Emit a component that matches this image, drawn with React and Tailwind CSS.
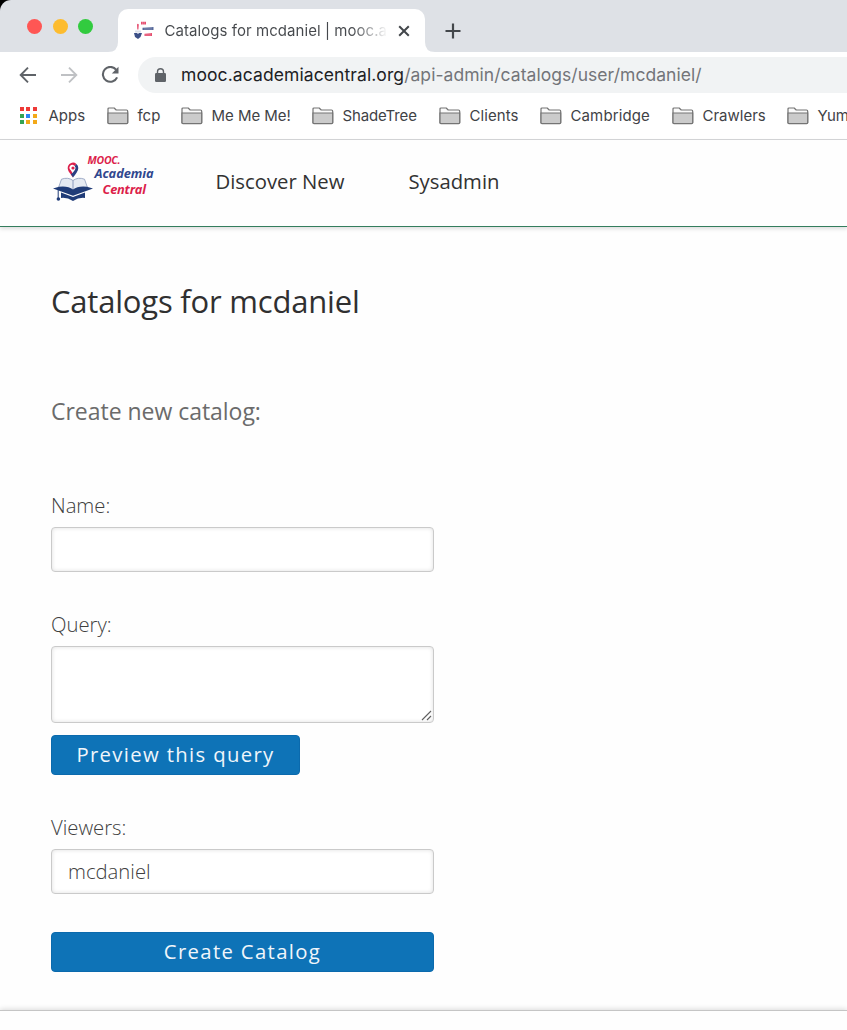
import React from "react";

const bookmarks = [
  { label: "fcp", box: "w-[74px]", text: "tracking-[0px]" },
  { label: "Me Me Me!", box: "w-[131px]", text: "tracking-[-0.03px]" },
  { label: "ShadeTree", box: "w-[127px]", text: "tracking-[-0.12px]" },
  { label: "Clients", box: "w-[101px]", text: "tracking-[0.08px]" },
  { label: "Cambridge", box: "w-[132px]", text: "tracking-[0.12px]" },
  { label: "Crawlers", box: "w-[115px]", text: "tracking-[0px]" },
  { label: "Yum", box: "w-[60px]", text: "tracking-[-0.1px]" },
];

const appColors = [
  "#ee3a37", "#ee3a37", "#ee3a37",
  "#34a353", "#2a84f5", "#f3a918",
  "#34a353", "#f3a918", "#f3a918",
];

function Folder() {
  return (
    <svg className="h-[18px] w-[22px] shrink-0" viewBox="0 0 22 18" fill="none">
      <path d="M1 15.8V2Q1 1 2 1H7.2L9.2 3H19.5Q20.7 3 20.7 4.2V15.8Z" fill="#fafafa" stroke="#747474" strokeWidth="1.2" strokeLinejoin="round" />
      <path d="M1 6H20.7V15.6Q20.7 16.6 19.7 16.6H2Q1 16.6 1 15.6Z" fill="#cbcbcb" stroke="#747474" strokeWidth="1.2" />
    </svg>
  );
}

function LogoMark({ className }) {
  return (
    <svg className={className} viewBox="0 0 40 40" fill="none">
      <path d="M20 15.5C17 11 14.7 9 14.7 6A5.3 5.3 0 0 1 23.4 1.9L21.7 4.1A2.9 2.9 0 1 0 17.8 8.2L19.5 11Z" fill="#dc1f4b" />
      <path d="M23.4 1.9A5.3 5.3 0 0 1 25.3 6C25.3 9 22.8 12 20 15.5L17.8 12L19.6 11L22 7.8A2.9 2.9 0 0 0 21.7 4.1Z" fill="#2b4083" />
      <circle cx="20" cy="6" r="1.6" fill="#dc1f4b" />
      <path d="M20 18.5Q15 14.8 8.5 17.2L5 27L20 31L35 27L31.5 17.2Q25 14.8 20 18.5Z" fill="#e5eaf2" stroke="#8b9abb" strokeWidth=".8" />
      <path d="M20 18.5V28" stroke="#7586ae" strokeWidth=".8" />
      <path d="M0 26.5L6 24.8Q15 23.7 20 27.5Q25 23.7 34 24.8L40 26.5L20 33.7Z" fill="#203c78" />
      <path d="M8 30.5L20 35L32 30.5V36Q26 35.2 20 39Q14 35.2 8 36Z" fill="#203c78" />
      <path d="M5.2 28V36" stroke="#203c78" strokeWidth="1" />
      <circle cx="5.4" cy="37" r="1.8" fill="#203c78" />
    </svg>
  );
}

function TabBar() {
  return (
    <div className="shrink-0 bg-black">
      <div className="flex h-[52px] rounded-tl-[11px] bg-[#dee1e6]">
        <div className="flex w-[108px] shrink-0 gap-[10.5px] pl-[27px] pt-[18.5px]">
          <span className="size-[15px] rounded-full bg-[#ff5654]" />
          <span className="size-[15px] rounded-full bg-[#fdbc2f]" />
          <span className="size-[15px] rounded-full bg-[#32cb3f]" />
        </div>
        <svg className="mt-[42px] size-[10px] shrink-0" viewBox="0 0 10 10"><path d="M10 0V10H0Q10 10 10 0Z" fill="white" /></svg>
        <div className="mt-[9px] flex h-[43px] w-[307px] shrink-0 items-center rounded-t-[10px] bg-white pl-[16px]">
          <svg className="h-[19px] w-[20px] shrink-0" viewBox="0 0 20 19">
            <g opacity=".9">
              <path d="M7 .7H12V3.5H7ZM10.5 12.7L18 12V15H10.5ZM3 3.5Q3.8 2 4.8 3.5L4.4 8.5H3.3Z" fill="#e33b60" />
              <path d="M8.5 6.7L19.5 6V9H8.5Z" fill="#445890" />
              <path d="M0 12H3L4 13L5 12H8L6.5 16L4 18L1 16Z" fill="#263d7b" />
              <path d="M1 9.5H7V11.5H1Z" fill="#d6dce8" />
              <path d="M8.5 0V4M10.2 0V4M11 6V10M13 5V10M15 5V10M17 5V10M12 12V16M14 12V16M16 12V16" stroke="white" strokeWidth=".4" opacity=".6" />
            </g>
          </svg>
          <div className="ml-[10.5px] w-[223px] shrink-0 whitespace-nowrap bg-[linear-gradient(90deg,#45484c_84%,transparent)] bg-clip-text font-['Inter','Roboto',sans-serif] text-[15px] leading-[22px] tracking-[0.06px] text-transparent">Catalogs for mcdaniel | mooc.a</div>
          <svg className="ml-[10px] size-[12px]" viewBox="0 0 12 12"><path d="M1.2 1.2L10.8 10.8M10.8 1.2L1.2 10.8" stroke="#43474b" strokeWidth="2" /></svg>
        </div>
        <svg className="mt-[42px] size-[10px] shrink-0" viewBox="0 0 10 10"><path d="M0 0V10H10Q0 10 0 0Z" fill="white" /></svg>
        <svg className="ml-[10px] mt-[23px] size-[16px]" viewBox="0 0 16 16"><path d="M8 .5V15.5M.5 8H15.5" stroke="#43474b" strokeWidth="2.2" /></svg>
      </div>
    </div>
  );
}

function Toolbar() {
  return (
    <div className="flex h-[46px] shrink-0 items-center bg-white pl-[19px]">
      <svg className="size-[18px] shrink-0" viewBox="0 0 18 18" fill="none" stroke="#5f6368" strokeWidth="1.9"><path d="M17 9H2M9 1.7L1.7 9L9 16.3" /></svg>
      <svg className="ml-[23px] size-[18px] shrink-0" viewBox="0 0 18 18" fill="none" stroke="#bfc1c4" strokeWidth="1.9"><path d="M1 9H16M9 1.7L16.3 9L9 16.3" /></svg>
      <svg className="ml-[22.5px] size-[18px] shrink-0" viewBox="0 0 18 18" fill="none"><path d="M15.1 3.7A7.4 7.4 0 1 0 16.1 11.3" stroke="#5f6368" strokeWidth="2.1" /><path d="M17.5 .7V7.6H10.8Z" fill="#5f6368" /></svg>
      <div className="ml-[19.5px] flex h-[36px] flex-1 items-center rounded-l-full bg-[#f1f3f4] pl-[17px]">
        <svg className="h-[14px] w-[11px] shrink-0" viewBox="0 0 11 14"><path d="M2.5 6V3.7A3 3 0 0 1 8.5 3.7V6" fill="none" stroke="#5f6368" strokeWidth="1.4" /><rect x="0" y="5" width="11" height="9" rx="1.2" fill="#5f6368" /></svg>
        <div className="ml-[15px] whitespace-nowrap font-['Inter','Roboto',sans-serif] text-[17.5px] leading-[24px] text-[#737579]">
          <span className="tracking-[0.09px] text-[#202124]">mooc.academiacentral.org</span><span className="tracking-[0.05px]">/api-admin/catalogs/user/mcdaniel/</span>
        </div>
      </div>
    </div>
  );
}

function Bookmarks() {
  return (
    <div className="flex h-[42px] shrink-0 items-center border-b border-[#d5d6d8] bg-white pb-[6px] pl-[19.5px] font-['Inter','Roboto',sans-serif] text-[15px] leading-[22px] text-[#3f4246]">
      <div className="flex w-[87px] shrink-0 items-center">
        <div className="grid size-[17px] grid-cols-3 gap-[2.5px]">
          {appColors.map((c, i) => <span key={i} className="size-[4px]" style={{ backgroundColor: c }} />)}
        </div>
        <span className="ml-[12px] tracking-[0px]">Apps</span>
      </div>
      {bookmarks.map((b) => (
        <div key={b.label} className={`flex shrink-0 items-center ${b.box}`}>
          <Folder />
          <span className={`ml-[9px] whitespace-nowrap ${b.text}`}>{b.label}</span>
        </div>
      ))}
    </div>
  );
}

function SiteHeader() {
  return (
    <header className="flex h-[87px] shrink-0 border-b-[1.5px] border-[#347d5d] shadow-[0_2px_4px_rgba(0,0,0,0.13)]">
      <div className="ml-[52.5px] flex w-[163px] pt-[15px]">
        <LogoMark className="mt-[7px] size-[40px] shrink-0" />
        <div className="-ml-[5px] font-['Open_Sans',sans-serif] font-bold italic leading-[15px]">
          <div className="-mt-[2px] text-[10.5px] tracking-[-0.25px] text-[#dc1f4b]">MOOC.</div>
          <div className="-mt-[2px] ml-[7px] text-[12.8px] tracking-[-0.05px] text-[#30478e]">Academia</div>
          <div className="mt-[1px] ml-[15px] text-[12.8px] tracking-[-0.2px] text-[#dc1f4b]">Central</div>
        </div>
      </div>
      <nav className="flex pt-[26px] font-['Open_Sans',sans-serif] text-[20.3px] leading-[31px] text-[#323232]">
        <span className="w-[193px]">Discover New</span>
        <span>Sysadmin</span>
      </nav>
    </header>
  );
}

export default function App() {
  return (
    <div className="flex h-[1030px] w-[847px] flex-col overflow-hidden bg-[#fefefe]">
      <TabBar />
      <Toolbar />
      <Bookmarks />
      <SiteHeader />
      <main className="flex h-[783px] shrink-0 flex-col items-start pl-[51px] font-['Open_Sans',sans-serif] text-[20.3px] font-light leading-[30px] text-[#404040]">
        <h1 className="mt-[52px] text-[31px] font-normal leading-[44px] tracking-[-0.2px] text-[#303030]">Catalogs for mcdaniel</h1>
        <h2 className="mt-[72px] text-[23px] font-normal leading-[32px] tracking-[-0.03px] text-[#6b6b6b]">Create new catalog:</h2>
        <label className="mt-[63px]">Name:</label>
        <input aria-label="Name" className="mt-[7px] h-[45px] w-[383px] rounded-[4px] border-[1.5px] border-[#cacaca] bg-white px-[16px] shadow-[inset_0_0_4px_rgba(0,0,0,0.13)] outline-none" />
        <label className="mt-[37px]">Query:</label>
        <div className="mt-[7px] flex h-[77px] w-[383px] items-end justify-end rounded-[4px] border-[1.5px] border-[#cacaca] bg-white shadow-[inset_0_0_4px_rgba(0,0,0,0.13)]">
          <svg className="mb-[1px] mr-[1px] size-[11px]" viewBox="0 0 11 11"><path d="M1 10L10 1M6 10L10 6" stroke="#606060" strokeWidth="1.1" /></svg>
        </div>
        <button className="mt-[12px] flex h-[40px] w-[249px] items-center justify-center rounded-[4px] border border-[#0b6aad] bg-[#0e73b7] pb-[2px] font-normal tracking-[1.35px] text-[#f0f6fb]"><span>Preview this query</span></button>
        <label className="mt-[37px]">Viewers:</label>
        <input aria-label="Viewers" defaultValue="mcdaniel" className="mt-[7px] h-[45px] w-[383px] rounded-[4px] border-[1.5px] border-[#cacaca] bg-white px-[16px] pb-[2px] shadow-[inset_0_0_4px_rgba(0,0,0,0.13)] outline-none" />
        <button className="mt-[38px] flex h-[40px] w-[383px] items-center justify-center rounded-[4px] border border-[#0b6aad] bg-[#0e73b7] pb-[2px] font-normal tracking-[1.35px] text-[#f0f6fb]"><span>Create Catalog</span></button>
      </main>
      <footer className="h-[20px] shrink-0 border-t-[1.5px] border-[#c5c5c5] bg-[#fefefe] shadow-[0_-1px_5px_rgba(0,0,0,0.14)]" />
    </div>
  );
}
